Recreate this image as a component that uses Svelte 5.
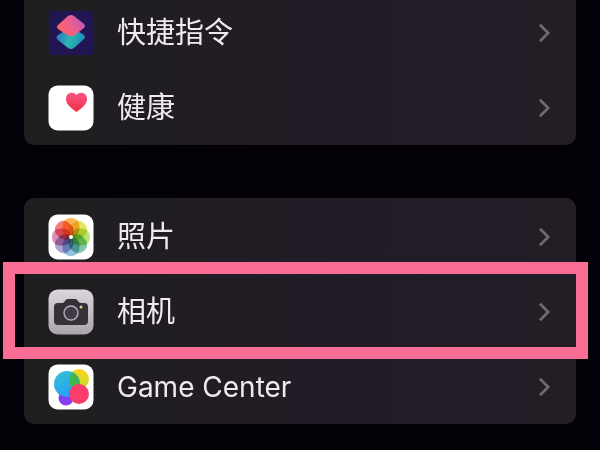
<script lang="ts">
    interface Item {
        icon: string;
        label: string;
        latin?: boolean;
        highlighted?: boolean;
    }

    const groups: Item[][] = [
        [
            { icon: 'shortcuts', label: '快捷指令' },
            { icon: 'health', label: '健康' }
        ],
        [
            { icon: 'photos', label: '照片' },
            { icon: 'camera', label: '相机', highlighted: true },
            { icon: 'game', label: 'Game Center', latin: true }
        ]
    ];

    const petals = ['#ffa21a', '#dfdc34', '#a5d843', '#58b58a', '#6fa9d0', '#8e86c4', '#d0679c', '#f4524a'];
</script>

<!-- gradients shared by the icons -->
<svg class="defs" aria-hidden="true">
    <defs>
        <linearGradient id="top" x1="0" y1="0.8" x2="1" y2="0.3">
            <stop offset="0" stop-color="#ff6660" />
            <stop offset="0.55" stop-color="#ec5e8e" />
            <stop offset="1" stop-color="#b95abb" />
        </linearGradient>
        <linearGradient id="bottom" x1="0" y1="0.3" x2="1" y2="0.6">
            <stop offset="0" stop-color="#2674c8" />
            <stop offset="0.5" stop-color="#2fb5ae" />
            <stop offset="1" stop-color="#1c88c4" />
        </linearGradient>
        <linearGradient id="heart" x1="0" y1="0" x2="0" y2="1">
            <stop offset="0" stop-color="#fa5584" />
            <stop offset="1" stop-color="#f22e44" />
        </linearGradient>
        <linearGradient id="metal" x1="0" y1="0" x2="0" y2="1">
            <stop offset="0" stop-color="#dbd5dc" />
            <stop offset="1" stop-color="#aaa4ab" />
        </linearGradient>
        <linearGradient id="blue" x1="0.2" y1="0" x2="0.7" y2="1">
            <stop offset="0" stop-color="#32c1d4" />
            <stop offset="1" stop-color="#279cfb" />
        </linearGradient>
        <linearGradient id="yellow" x1="0.6" y1="0" x2="0.3" y2="1">
            <stop offset="0" stop-color="#ffd31e" />
            <stop offset="1" stop-color="#b2df2e" />
        </linearGradient>
    </defs>
</svg>

<main>
    {#each groups as group}
        <ul class="group">
            {#each group as item}
                <li>
                    <a href="#{item.icon}" class="row" class:highlighted={item.highlighted}>
                        <svg class="icon" viewBox="0 0 46 46" aria-hidden="true">
                            {#if item.icon === 'shortcuts'}
                                <rect x="1" y="1" width="44" height="44" rx="3" fill="#211653" />
                                <path d="M10 25 L23 17 L36 25 Q38 27 36 29 L26 38 Q23 40 20 38 L10 30 Q7 27 10 25Z" fill="url(#bottom)" />
                                <path d="M10 15 L20 6 Q23 4 26 6 L36 14 Q38 16 36 18 L27 25 Q23 27 19 25 L10 19 Q8 17 10 15Z" fill="url(#top)" />
                            {:else if item.icon === 'health'}
                                <rect x="0.5" y="0.5" width="45" height="45" rx="9" fill="#fff" />
                                <path d="M28.500 27 C23 23 18 19.500 18 14 C18 7 25.500 6 28.500 10 C31.500 6 39 7 39 14 C39 19.500 34 23 28.500 27Z" fill="url(#heart)" />
                            {:else if item.icon === 'photos'}
                                <rect x="0.5" y="0.5" width="45" height="45" rx="9" fill="#fff" />
                                <g class="petals">
                                    {#each petals as color, i}
                                        <rect x="14.5" y="4" width="17" height="19" rx="8" fill={color} transform="rotate({i * 45} 23 23)" />
                                    {/each}
                                </g>
                                <circle cx="23" cy="23" r="2" fill="#fff" />
                            {:else if item.icon === 'camera'}
                                <rect x="0.5" y="0.5" width="45" height="45" rx="9" fill="url(#metal)" />
                                <path d="M10 14 H14 Q16 14 17 12 Q18 10 20 10 H27 Q29 10 30 12 Q31 14 33 14 H36 Q40 14 40 18 V32 Q40 36 36 36 H10 Q6 36 6 32 V18 Q6 14 10 14Z" fill="#343139" />
                                <circle cx="23" cy="24" r="7" fill="#403b45" stroke="#b5b0b7" stroke-width="1.4" />
                                <circle cx="33" cy="18" r="1.500" fill="#d6d18c" />
                            {:else}
                                <rect x="0.5" y="0.5" width="45" height="45" rx="9" fill="#fff" />
                                <circle cx="18" cy="34" r="7.500" fill="#863df4" />
                                <circle cx="31" cy="15" r="10" fill="url(#yellow)" />
                                <circle cx="19" cy="20" r="13" fill="url(#blue)" />
                                <path d="M24 8 C19.500 15 20 24 29 27.500 C33.500 21 32.500 12 24 8Z" fill="#41b552" />
                                <circle cx="31" cy="30" r="10" fill="#fa3d6b" />
                            {/if}
                        </svg>
                        <span class="label" class:latin={item.latin}>{item.label}</span>
                        <svg class="chevron" viewBox="0 0 14 22" aria-hidden="true">
                            <path d="M2 2 L11 11 L2 20" />
                        </svg>
                    </a>
                </li>
            {/each}
        </ul>
    {/each}
</main>

<style>
    :global(body) {
        margin: 0;
        background: #040007;
        overflow: hidden;
    }

    .defs {
        position: absolute;
        width: 0;
        height: 0;
    }

    main {
        display: flex;
        flex-direction: column;
        gap: 53px;
        padding: 0 24px;
        /* the list is scrolled part of the way down */
        margin-top: -6px;
        font-family: Inter, "Noto Sans CJK SC", sans-serif;
    }

    .group {
        list-style: none;
        margin: 0;
        padding: 1px 0 0;
        border-radius: 10px;
        background: linear-gradient(90deg, #1e1e1f 0%, #201d22 25%, #231c26 50%, #231d26 100%);
    }

    .group:first-child {
        border-radius: 0 0 10px 10px;
    }

    .row {
        position: relative;
        display: flex;
        align-items: center;
        height: 75px;
        padding: 0 25px 0 24px;
        color: #eeeaf0;
        text-decoration: none;
    }

    .highlighted::after {
        content: '';
        position: absolute;
        inset: -12px -12px -10px -21px;
        border: 12px solid #fa6e96;
    }

    .icon {
        width: 46px;
        height: 46px;
        flex: none;
    }

    .petals rect {
        opacity: 0.75;
        mix-blend-mode: multiply;
    }

    .label {
        flex: 1;
        margin-left: 23px;
        font-size: 29px;
        line-height: 40px;
    }

    .latin {
        font-size: 28px;
    }

    .chevron {
        width: 13px;
        height: 20px;
        fill: none;
        stroke: #6f6971;
        stroke-width: 3;
    }
</style>
